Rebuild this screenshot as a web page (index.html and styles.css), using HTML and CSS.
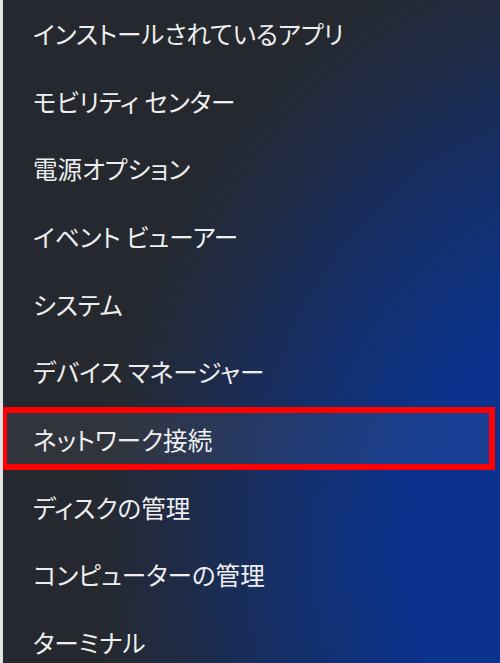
FILE: index.html
```html
<!DOCTYPE html>
<html lang="ja">
<head>
  <meta charset="UTF-8" />
  <meta name="viewport" content="width=device-width, initial-scale=1" />
  <title>クイック リンク メニュー</title>
  <link rel="stylesheet" href="styles.css">
</head>
<body>

  <!-- Win+X メニュー -->
  <ul class="menu">
    <li class="menu-item">インストールされているアプリ</li>
    <li class="menu-item">モビリティ センター</li>
    <li class="menu-item">電源オプション</li>
    <li class="menu-item">イベント ビューアー</li>
    <li class="menu-item">システム</li>
    <li class="menu-item">デバイス マネージャー</li>
    <li class="menu-item active">ネットワーク接続</li>
    <li class="menu-item">ディスクの管理</li>
    <li class="menu-item">コンピューターの管理</li>
    <li class="menu-item">ターミナル</li>
  </ul>

</body>
</html>
```

FILE: styles.css
```css
/* Сброс */
*, *::before, *::after {
  box-sizing: border-box;
}
html, body {
  margin: 0;
  height: 100%;
}

body {
  width: 500px;
  height: 663px;
  overflow: hidden;
  border-left: 3px solid #e2e2e2;
  font-family: "Noto Sans CJK JP", "Noto Sans", sans-serif;
  color: #eeeeee;
  background:
    radial-gradient(ellipse 500px 630px at 595px 550px,
      #0a3392 0%,
      #0b328c 38%,
      #142f6a 62%,
      #1f2b47 83%,
      #25292f 100%);
  background-color: #25292f;
}

.menu {
  list-style: none;
  margin: -1px 0 0 0;
  padding: 0;
}

.menu-item {
  position: relative;
  height: 67.7px;
  display: flex;
  align-items: center;
  padding-left: 30px;
  font-size: 24.6px;
  font-feature-settings: "palt";
  white-space: nowrap;
}

/* выделенный пункт */
.menu-item.active::before {
  content: "";
  position: absolute;
  left: 2px;
  right: 9px;
  top: 6px;
  height: 54px;
  background: rgba(255, 255, 255, 0.06);
}

.menu-item.active::after {
  content: "";
  position: absolute;
  left: -2px;
  right: 5px;
  top: 2px;
  height: 63px;
  border: 6px solid #ff0000;
}
```
